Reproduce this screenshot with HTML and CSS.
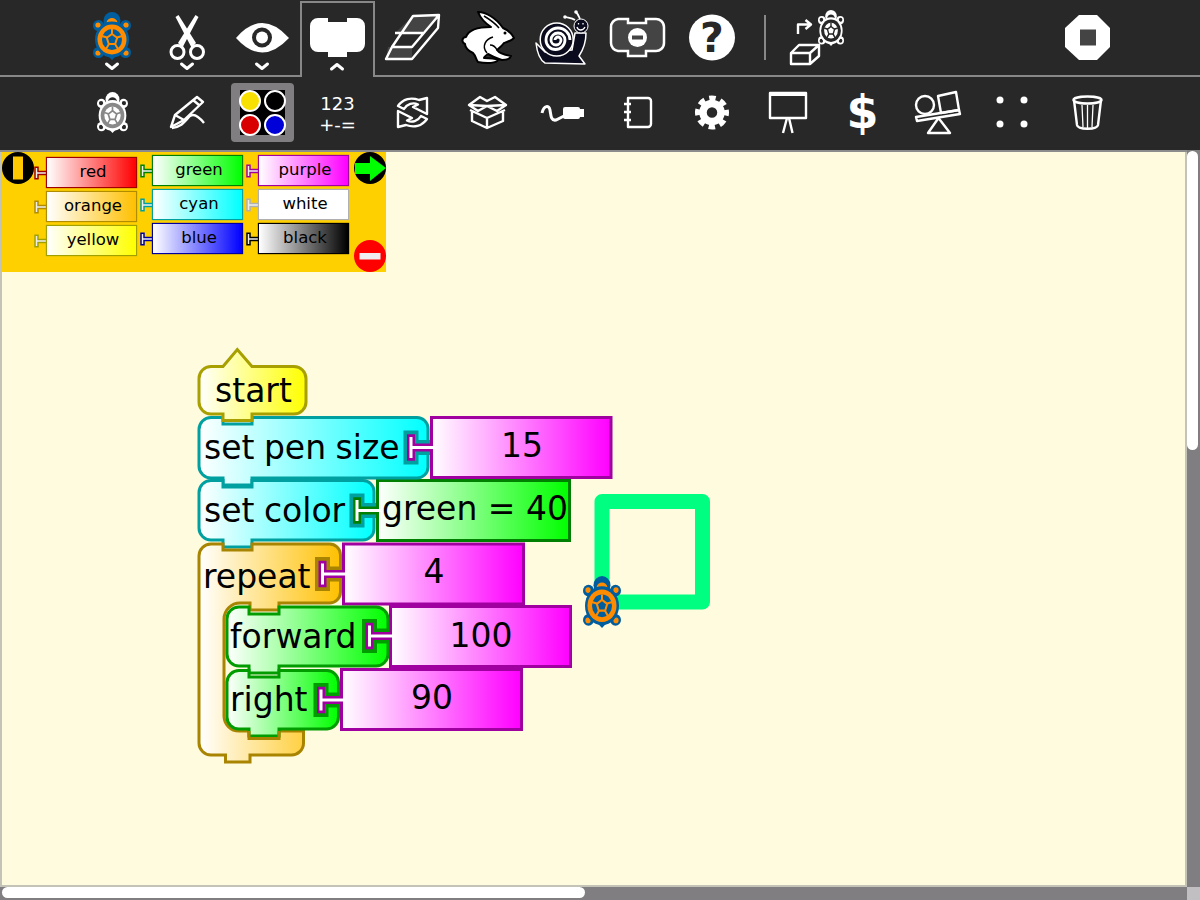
FILE: index.html
```html
<!DOCTYPE html>
<html lang="en">
<head>
<meta charset="utf-8">
<title>Turtle Blocks</title>
<link rel="stylesheet" href="styles.css">
</head>
<body>
<svg class="defs" width="0" height="0">
  <defs>
    <symbol id="turtle" viewBox="0 0 38 48" preserveAspectRatio="none">
      <circle class="t-outer" cx="19" cy="8.5" r="8.5"/>
      <path class="t-leg" d="M13.5 10.5 C14.5 4.5 23.5 4.5 24.5 10.5 Z"/>
      <circle class="t-outer" cx="5.5" cy="13.5" r="5.5"/>
      <circle class="t-outer" cx="32.5" cy="13.5" r="5.5"/>
      <circle class="t-outer" cx="5.5" cy="40.5" r="5.5"/>
      <circle class="t-outer" cx="32.5" cy="40.5" r="5.5"/>
      <circle class="t-leg" cx="5" cy="13" r="2.6"/>
      <circle class="t-leg" cx="33" cy="13" r="2.6"/>
      <circle class="t-leg" cx="5" cy="41" r="2.6"/>
      <circle class="t-leg" cx="33" cy="41" r="2.6"/>
      <path class="t-outer" d="M15 44 L19 48 L23 44 Z"/>
      <ellipse class="t-outer" cx="19" cy="27.500" rx="17" ry="18"/>
      <ellipse class="t-ring" cx="19" cy="27.500" rx="14.500" ry="15"/>
      <ellipse class="t-core" cx="19" cy="27.500" rx="10" ry="10.500"/>
      <path class="t-spoke" d="M19 27 V17 M19 27 L29 24 M19 27 L25 37 M19 27 L13 37 M19 27 L9 24"/>
      <path class="t-penta" d="M19 22 L24.200 25.800 L22.200 32 L15.800 32 L13.800 25.800 Z"/>
    </symbol>
    <symbol id="ptee" viewBox="0 0 13 14">
      <path class="ptee-o" d="M2.500 0.500 V13.500 M2.500 7 H13"/>
      <path class="ptee-i" d="M2.500 2 V12 M2.500 7 H13"/>
    </symbol>
    <g id="tee">
      <path class="tee-sock" d="M0 -17 V17 M0 0 H19"/>
      <path class="tee-val" d="M0 -13.300 V13.300 M0 0 H22"/>
      <path class="tee-core" d="M0 -10.500 V10.500 M0 0 H23"/>
    </g>
    <linearGradient id="g-yellow"><stop offset="0" stop-color="#fff"/><stop offset="1" stop-color="#ff0"/></linearGradient>
    <linearGradient id="g-cyan"><stop offset="0" stop-color="#fff"/><stop offset="1" stop-color="#0ff"/></linearGradient>
    <linearGradient id="g-green"><stop offset="0" stop-color="#fff"/><stop offset="1" stop-color="#0f0"/></linearGradient>
    <linearGradient id="g-orange"><stop offset="0" stop-color="#fff"/><stop offset="1" stop-color="#ffc000"/></linearGradient>
    <linearGradient id="g-purple"><stop offset="0" stop-color="#fff"/><stop offset="1" stop-color="#f0f"/></linearGradient>
  </defs>
</svg>

<header class="toolbar">
  <nav class="row row-main">
    <div class="tool">
      <svg class="icon" viewBox="75 0 75 75">
        <use class="turtle-color" href="#turtle" x="93" y="12" width="38" height="48"/>
        <path class="chev" d="M106.500 64 L112 68.500 L117.500 64"/>
      </svg>
    </div>
    <div class="tool">
      <svg class="icon" viewBox="150 0 75 75">
        <path class="fill-w" d="M175.500 17 L178.500 15 L196 43 L191.500 47.500 Z"/>
        <path class="fill-w" d="M198.500 17 L195.500 15 L178 43 L182.500 47.500 Z"/>
        <circle class="line-w3" cx="177.500" cy="52" r="6.500"/>
        <circle class="line-w3" cx="197" cy="52" r="6.500"/>
        <path class="chev" d="M181.500 64 L187 68.500 L192.500 64"/>
      </svg>
    </div>
    <div class="tool">
      <svg class="icon" viewBox="225 0 75 75">
        <path class="fill-w" d="M236 38 Q262 8 289 38 Q262 67 236 38 Z"/>
        <circle class="fill-d" cx="262" cy="37.500" r="10"/>
        <circle class="fill-w" cx="262" cy="37.500" r="6"/>
        <path class="chev" d="M256.500 64 L262 68.500 L267.500 64"/>
      </svg>
    </div>
    <div class="tool tool-active">
      <svg class="icon icon-active" viewBox="300 0 75 75">
        <path class="fill-w" d="M318 18 H328 V22 H347 V18 H357 A8 8 0 0 1 365 26 V44 A8 8 0 0 1 357 52 H347 V57 H328 V52 H318 A8 8 0 0 1 310 44 V26 A8 8 0 0 1 318 18 Z"/>
        <path class="chev" d="M331.500 69 L337 64.500 L342.500 69"/>
      </svg>
    </div>
    <div class="tool">
      <svg class="icon" viewBox="375 0 75 75">
        <path class="face" d="M413 16 L439 15 L423 33 L395 33 Z"/>
        <path class="face" d="M388 47 L412 47 L412 59 L386 59 Z"/>
        <path class="line-w" d="M413 16 L439 15 L438 28 L412 59 L386 59 L392 47 Z M439 15 L412 47 H391 M395 33 H423"/>
      </svg>
    </div>
    <div class="tool">
      <svg class="icon" viewBox="450 0 75 75">
        <path class="rabbit" d="M478 12 C486 12 496 18 503 28 C508 30 512 34 514 38 C511 41 507 42 504 43 C501 47 498 49 497 50 C499 53 505 55 511 56 C510 59 506 60 502 60 C497 59 492 56 488 54 C485 56 484 57 484 58 C488 58 494 58 498 60 C497 63 487 64 478 62 C476 60 476 56 473 53 C468 51 465 47 465 44 C461 42 462 37 466 37 C468 31 476 27 491 27 C485 23 480 17 478 12 Z"/>
        <path class="rabbit-line" d="M493 37 C486 39 481 46 487 53 M497 50 C495 46 492 45 490 45 M484 16 C489 19 495 23 499 28"/>
        <circle class="fill-k" cx="505" cy="33" r="1.500"/>
      </svg>
    </div>
    <div class="tool">
      <svg class="icon" viewBox="525 0 75 75">
        <path class="snail-body" d="M536 43 L545 52 L572 50 L575 33 H586 C586 42 583 50 579 56 L585 64 L545 63 C540 60 537 52 536 43 Z"/>
        <circle class="snail-shell" cx="556.700" cy="39.500" r="16.500"/>
        <path class="snail-spiral" d="M555 40 A3 3 0 0 1 561 40 A5 5 0 0 1 551 40 A7 7 0 0 1 565 40 A9.500 9.500 0 0 1 546 40 A12 12 0 0 1 570 40"/>
        <path class="line-w2" d="M575 20 C572 18 569 18 565 17 M580 19 C579 17 578 14 576 12"/>
        <circle class="fill-w" cx="565" cy="17" r="1.800"/>
        <circle class="fill-w" cx="576" cy="12" r="1.800"/>
        <circle class="snail-head" cx="581" cy="26" r="7"/>
        <path class="snail-face" d="M577 27 C578 31 583 31 585 27 M578.500 23 V24.500 M583 23 V24.500"/>
      </svg>
    </div>
    <div class="tool">
      <svg class="icon" viewBox="600 0 75 75">
        <path class="block-off" d="M618 19 H628 V23 H646 V19 H655 A8 8 0 0 1 664 27 V43 A8 8 0 0 1 655 51 H646 V56 H628 V51 H618 A8 8 0 0 1 611 43 V27 A8 8 0 0 1 618 19 Z"/>
        <circle class="fill-w" cx="637.500" cy="37.500" r="9.500"/>
        <rect class="fill-d2" x="632" y="35.500" width="11" height="4"/>
      </svg>
    </div>
    <div class="tool">
      <svg class="icon" viewBox="675 0 75 75">
        <circle class="fill-w" cx="712" cy="37.500" r="23"/>
        <text class="help" x="712" y="52">?</text>
      </svg>
    </div>
    <div class="sep"></div>
    <div class="tool">
      <svg class="icon" viewBox="780 0 75 75">
        <path class="line-w" d="M798 34 V24.500 H810 M805.500 20 L811 24.500 L805.500 29"/>
        <path class="line-w" d="M791 53 H810 V64 H791 Z M791 53 L799 45 H819 L819 56 L810 64 M810 53 L819 45"/>
        <use class="turtle-line" href="#turtle" x="818" y="10" width="26" height="36"/>
      </svg>
    </div>
    <div class="tool tool-stop">
      <svg class="icon" viewBox="1050 0 75 75">
        <path class="fill-w" d="M1079 15 H1097 L1110 28 V47 L1097 60 H1079 L1065 47 V28 Z"/>
        <rect class="stop-core" x="1080" y="29.500" width="16" height="16"/>
      </svg>
    </div>
  </nav>
  <nav class="row row-sub">
    <div class="tool">
      <svg class="icon-sub" viewBox="75 77 75 73">
        <use class="turtle-gray" href="#turtle" x="97" y="92" width="31" height="41"/>
      </svg>
    </div>
    <div class="tool">
      <svg class="icon-sub" viewBox="150 77 75 73">
        <path class="line-w" d="M171 127 L175 115 L197 97 L203 102 L184 120 Z M175 115 L184 120 M193 100 L199 105"/>
        <path class="line-w" d="M172 128 C180 128 184 122 190 116 C194 113 200 118 204 123"/>
      </svg>
    </div>
    <div class="tool tool-palette">
      <div class="swatches">
        <span class="swatch swatch-yellow"></span>
        <span class="swatch swatch-black"></span>
        <span class="swatch swatch-red"></span>
        <span class="swatch swatch-blue"></span>
      </div>
    </div>
    <div class="tool tool-math">
      <span class="math-line">123</span>
      <span class="math-line">+-=</span>
    </div>
    <div class="tool">
      <svg class="icon-sub" viewBox="375 77 75 73">
        <path class="line-w" d="M398 106 C403 99 411 97 419 100 L427 98 V114 L413 107 L418 104.500 C413 102 407 104 404 109 Z"/>
        <path class="line-w" d="M427 119 C422 126 414 128 406 125 L398 127 V111 L412 118 L407 120.500 C412 123 418 121 421 116 Z"/>
      </svg>
    </div>
    <div class="tool">
      <svg class="icon-sub" viewBox="450 77 75 73">
        <path class="line-w" d="M469 105 L480 97 L487 101 L495 97 L506 105 L497 111 L487 106 L478 111 Z M487 106 L506 105 M469 105 L487 106 M470 110 L487 118 L505 110 M472 112 V121 L487 128 L503 121 V112 M487 128 V118"/>
      </svg>
    </div>
    <div class="tool">
      <svg class="icon-sub" viewBox="525 77 75 73">
        <path class="line-w3" d="M542 113 C544 105 549 105 550 110 C551 116 551 121 556 120 L564 116"/>
        <rect class="fill-w" x="563" y="107" width="17" height="12" rx="2"/>
        <rect class="fill-w" x="579" y="109" width="5" height="8"/>
      </svg>
    </div>
    <div class="tool">
      <svg class="icon-sub" viewBox="600 77 75 73">
        <path class="line-w" d="M628 98 H648 A3 3 0 0 1 651 101 V124 A3 3 0 0 1 648 127 H628 Z"/>
        <path class="line-w" d="M624 104 H631 M624 112 H631 M624 120 H631"/>
      </svg>
    </div>
    <div class="tool">
      <svg class="icon-sub" viewBox="675 77 75 73">
        <circle class="gear-ring" cx="712" cy="112.500" r="9"/>
        <circle class="gear-teeth" cx="712" cy="112.500" r="14.500"/>
      </svg>
    </div>
    <div class="tool">
      <svg class="icon-sub" viewBox="750 77 75 73">
        <path class="line-w" d="M770 93 H806 V118 H770 Z"/>
        <path class="line-w3" d="M770 94.500 H806"/>
        <path class="line-w" d="M787 118 L783 133 M789 118 L792.500 133"/>
      </svg>
    </div>
    <div class="tool tool-dollar"><span class="dollar">$</span></div>
    <div class="tool">
      <svg class="icon-sub" viewBox="900 77 75 73">
        <circle class="line-w" cx="925" cy="105" r="9"/>
        <path class="line-w" d="M938 96 L956 92 L959 110 L941 113 Z"/>
        <path class="line-w" d="M916 117 L959 110 L960 114 L917 121 Z"/>
        <path class="line-w" d="M938.500 118 L928 133 H950 Z"/>
      </svg>
    </div>
    <div class="tool">
      <svg class="icon-sub" viewBox="975 77 75 73">
        <circle class="fill-w" cx="1000" cy="100" r="3.500"/>
        <circle class="fill-w" cx="1024" cy="100" r="3.500"/>
        <circle class="fill-w" cx="1000" cy="124" r="3.500"/>
        <circle class="fill-w" cx="1024" cy="124" r="3.500"/>
      </svg>
    </div>
    <div class="tool">
      <svg class="icon-sub" viewBox="1050 77 75 73">
        <ellipse class="line-w" cx="1087.500" cy="100" rx="14" ry="3.500"/>
        <path class="line-w" d="M1074 100 L1077 125 C1078 130 1097 130 1098 125 L1101 100"/>
        <path class="line-t" d="M1082 105 L1083 127 M1087.500 105 V128 M1093 105 L1092 127"/>
      </svg>
    </div>
  </nav>
</header>

<main class="workspace">
  <section class="canvas">
    <svg class="drawing" viewBox="0 150 1186 735">
      <rect class="pen-trace" x="602" y="501.500" width="100.500" height="100.500"/>
      <use class="turtle-color" href="#turtle" x="583" y="576" width="38" height="52"/>

      <!-- value blocks -->
      <rect class="val val-purple" x="431.500" y="417.500" width="179.500" height="60"/>
      <text class="lbl lbl-mid" x="522" y="457">15</text>
      <rect class="val val-green" x="377.500" y="480.500" width="192" height="60"/>
      <text class="lbl lbl-mid" x="475" y="520">green = 40</text>
      <rect class="val val-purple" x="343.500" y="544" width="180" height="60"/>
      <text class="lbl lbl-mid" x="434" y="583">4</text>
      <rect class="val val-purple" x="390.500" y="606.500" width="180" height="60"/>
      <text class="lbl lbl-mid" x="481" y="647">100</text>
      <rect class="val val-purple" x="341.500" y="669.500" width="180" height="60"/>
      <text class="lbl lbl-mid" x="432" y="709">90</text>

      <!-- stack -->
      <g>
        <path class="blk blk-cyan" d="M211 417.500 H223 V424 H252 V417.500 H417 A11 11 0 0 1 428 428.500 V467 A11 11 0 0 1 417 478 H252 V485 H223 V478 H211 A12 12 0 0 1 199 466 V429.500 A12 12 0 0 1 211 417.500 Z"/>
        <text class="lbl lbl-tight" x="204" y="459">set pen size</text>
        <use class="tee-cyan-purple" href="#tee" x="411" y="447.500"/>

        <path class="blk blk-cyan" d="M211 480.500 H223 V487 H252 V480.500 H363 A11 11 0 0 1 374 491.500 V529 A11 11 0 0 1 363 540 H252 V547 H223 V540 H211 A12 12 0 0 1 199 528 V492.500 A12 12 0 0 1 211 480.500 Z"/>
        <text class="lbl lbl-tight" x="204" y="522">set color</text>
        <use class="tee-cyan-green" href="#tee" x="357" y="510.500"/>

        <path class="blk blk-orange" d="M211 544 H223 V550 H252 V544 H329 A11 11 0 0 1 340.500 555 V592 A11 11 0 0 1 329 603 H279 V610 H250 V603 H240 A16 16 0 0 0 224 619 V716 A15 15 0 0 0 239 731 H303.500 V743 A12 12 0 0 1 291 755 H250 V762 H225.500 V755 H211 A12 12 0 0 1 199 743 V556 A12 12 0 0 1 211 544 Z"/>
        <text class="lbl" x="203" y="588">repeat</text>
        <use class="tee-orange-purple" href="#tee" x="322.500" y="574"/>

        <path class="blk blk-green" d="M239 607 H249 V614 H279 V607 H376 A12 12 0 0 1 388 619 V654 A12 12 0 0 1 376 666 H279 V673 H249 V666 H239 A12 12 0 0 1 227 654 V619 A12 12 0 0 1 239 607 Z"/>
        <text class="lbl" x="230" y="648">forward</text>
        <use class="tee-green-purple" href="#tee" x="369.500" y="636"/>

        <path class="blk blk-green" d="M239 670.500 H249 V677 H279 V670.500 H327 A12 12 0 0 1 338.500 682 V717 A12 12 0 0 1 327 729 H279 V736 H249 V729 H239 A12 12 0 0 1 227 717 V682 A12 12 0 0 1 239 670.500 Z"/>
        <text class="lbl" x="230" y="711">right</text>
        <use class="tee-green-purple" href="#tee" x="321" y="700"/>
        <path class="notch-orange" d="M249 731 V738.500 H279 V731"/>

        <path class="blk blk-yellow" d="M211 366.500 H223 L237.300 349.500 L252 366.500 H294 A12 12 0 0 1 306 378.500 V402 A12 12 0 0 1 294 414 H252 V420.500 H223 V414 H211 A12 12 0 0 1 199 402 V378.500 A12 12 0 0 1 211 366.500 Z"/>
        <text class="lbl" x="215" y="402">start</text>
      </g>
    </svg>

    <aside class="palette">
      <svg class="pal-btn pal-btn-pin" viewBox="0 0 32 32">
        <circle class="fill-k" cx="16" cy="16" r="16"/>
        <rect class="pal-pin" x="10.500" y="4" width="11" height="24"/>
      </svg>
      <div class="pal-col pal-col-first">
        <div class="pal-item c-red"><svg class="ptee"><use href="#ptee"/></svg><span class="pal-block">red</span></div>
        <div class="pal-item c-orange"><svg class="ptee"><use href="#ptee"/></svg><span class="pal-block">orange</span></div>
        <div class="pal-item c-yellow"><svg class="ptee"><use href="#ptee"/></svg><span class="pal-block">yellow</span></div>
      </div>
      <div class="pal-col">
        <div class="pal-item c-green"><svg class="ptee"><use href="#ptee"/></svg><span class="pal-block">green</span></div>
        <div class="pal-item c-cyan"><svg class="ptee"><use href="#ptee"/></svg><span class="pal-block">cyan</span></div>
        <div class="pal-item c-blue"><svg class="ptee"><use href="#ptee"/></svg><span class="pal-block">blue</span></div>
      </div>
      <div class="pal-col">
        <div class="pal-item c-purple"><svg class="ptee"><use href="#ptee"/></svg><span class="pal-block">purple</span></div>
        <div class="pal-item c-white"><svg class="ptee"><use href="#ptee"/></svg><span class="pal-block">white</span></div>
        <div class="pal-item c-black"><svg class="ptee"><use href="#ptee"/></svg><span class="pal-block">black</span></div>
      </div>
      <svg class="pal-btn pal-btn-next" viewBox="0 0 32 32">
        <circle class="fill-k" cx="16" cy="16" r="16"/>
        <path class="pal-arrow" d="M1 11 H16 V4 L32 16 L16 29 V22 H1 Z"/>
      </svg>
      <svg class="pal-btn pal-btn-close" viewBox="0 0 32 32">
        <circle class="pal-red" cx="16" cy="16" r="16"/>
        <rect class="pal-minus" x="5.500" y="13" width="21" height="6.500"/>
      </svg>
    </aside>
  </section>
  <div class="scroll-v"><div class="thumb-v"></div></div>
  <div class="scroll-h"><div class="thumb-h"></div></div>
  <div class="scroll-corner"></div>
</main>
</body>
</html>
```

FILE: styles.css
```css
* { box-sizing: border-box; }
html, body { margin: 0; height: 100%; }
body {
  width: 1200px;
  height: 900px;
  display: flex;
  flex-direction: column;
  overflow: hidden;
  background: #282828;
  font-family: "DejaVu Sans", sans-serif;
}
.defs { position: absolute; }

/* toolbars */
.toolbar { height: 150px; flex: none; background: #282828; }
.row { display: flex; padding-left: 75px; }
.row-main { height: 77px; border-bottom: 2px solid #888; }
.row-sub { height: 73px; }
.tool { width: 75px; flex: none; }
.icon { display: block; width: 75px; height: 75px; }
.icon-sub { display: block; width: 75px; height: 73px; }
.tool-active {
  position: relative;
  height: 76px;
  margin-top: 1px;
  background: #282828;
  box-shadow: inset 2px 0 #888, inset -2px 0 #888, inset 0 2px #888;
}
.icon-active { margin-top: -1px; }
.sep { width: 2px; height: 45px; margin: 15px 14px 0; background: #888; flex: none; }
.tool-stop { margin-left: auto; margin-right: 75px; }

.fill-w { fill: #fff; }
.fill-d { fill: #282828; }
.fill-d2 { fill: #444; }
.fill-k { fill: #000; }
.line-w { fill: none; stroke: #fff; stroke-width: 2.4; stroke-linejoin: round; }
.line-w2 { fill: none; stroke: #fff; stroke-width: 1.8; }
.line-w3 { fill: none; stroke: #fff; stroke-width: 3; }
.line-t { fill: none; stroke: #fff; stroke-width: 1.3; }
.chev { fill: none; stroke: #fff; stroke-width: 3; stroke-linecap: round; stroke-linejoin: round; }
.face { fill: #444; }
.rabbit { fill: #fff; stroke: #000; stroke-width: 2; stroke-linejoin: round; }
.rabbit-line { fill: none; stroke: #000; stroke-width: 1.5; }
.snail-body { fill: #0b0b1e; stroke: #fff; stroke-width: 1.5; stroke-linejoin: round; }
.snail-shell { fill: #0b0b1e; stroke: #fff; stroke-width: 1.5; }
.snail-spiral { fill: none; stroke: #fff; stroke-width: 2.8; }
.snail-head { fill: #0b0b1e; stroke: #fff; stroke-width: 1; }
.snail-face { fill: none; stroke: #fff; stroke-width: 1.3; }
.block-off { fill: #444; stroke: #fff; stroke-width: 2.5; }
.help { font: bold 41px "DejaVu Sans", sans-serif; fill: #282828; text-anchor: middle; }
.stop-core { fill: #444; }
.gear-ring { fill: none; stroke: #fff; stroke-width: 7.5; }
.gear-teeth { fill: none; stroke: #fff; stroke-width: 5; stroke-dasharray: 6.5 4.89; stroke-dashoffset: 3.25; }

/* turtle symbol */
.t-outer { fill: var(--t-outer); }
.t-leg { fill: var(--t-leg); }
.t-ring { fill: var(--t-ring); }
.t-core { fill: var(--t-core); }
.t-spoke { fill: none; stroke: var(--t-spoke); stroke-width: 2; }
.t-penta { fill: var(--t-penta); stroke: var(--t-spoke); stroke-width: 2; }
.turtle-color { --t-outer: #005e9e; --t-leg: #ff8c00; --t-ring: #ff8c00; --t-core: #005e9e; --t-spoke: #ff8c00; --t-penta: #005e9e; }
.turtle-gray { --t-outer: #fff; --t-leg: #282828; --t-ring: #888; --t-core: #fff; --t-spoke: #888; --t-penta: #fff; }
.turtle-line { --t-outer: #fff; --t-leg: #282828; --t-ring: #282828; --t-core: #fff; --t-spoke: #282828; --t-penta: #fff; }

/* second toolbar cells */
.tool-palette { display: flex; justify-content: center; padding-top: 6px; }
.swatches {
  width: 63px;
  height: 59px;
  padding: 5.500px 7px;
  border-radius: 4px;
  display: grid;
  grid-template-columns: 1fr 1fr;
  grid-template-rows: 1fr 1fr;
  place-items: center;
  background: linear-gradient(#000, #000) center / 45px 45px no-repeat, #807e80;
}
.swatch { width: 22px; height: 22px; border-radius: 50%; border: 2px solid #fff; }
.swatch-yellow { background: #f8e000; }
.swatch-black { background: #000; }
.swatch-red { background: #d80000; }
.swatch-blue { background: #0000d8; }
.tool-math { display: flex; flex-direction: column; align-items: center; padding-top: 16px; color: #fff; }
.math-line { font-size: 18px; line-height: 21px; }
.tool-dollar { display: flex; justify-content: center; padding-top: 5px; }
.dollar { color: #fff; font-size: 46px; font-weight: bold; line-height: 60px; }

/* workspace */
.workspace {
  flex: 1;
  display: grid;
  grid-template-columns: 1187px 13px;
  grid-template-rows: 737px 13px;
  min-height: 0;
}
.canvas {
  position: relative;
  background: #fffbdf;
  box-shadow: inset 0 2px #8c8c8c, inset 2px 0 #c3c3b8, inset -2px 0 #c3c3b8, inset 0 -2px #c3c3b8;
  padding: 2px;
  overflow: hidden;
}
.drawing { position: absolute; left: 0; top: 0; width: 1186px; height: 735px; }
.pen-trace { fill: none; stroke: #00ff80; stroke-width: 15; stroke-linejoin: round; }
.scroll-v { background: #807e80; padding-top: 1px; }
.thumb-v { width: 11px; height: 299px; background: #fff; border-radius: 6px; }
.scroll-h { background: #807e80; padding: 0 0 0 2px; }
.thumb-h { width: 583px; height: 11px; background: #fff; border-radius: 6px; }
.scroll-corner { background: #c2bfc2; }

/* program blocks */
.lbl { font-size: 33px; fill: #000; }
.lbl-mid { text-anchor: middle; }
.lbl-tight { word-spacing: -1px; }
.val { stroke-width: 3; }
.val-purple { fill: url(#g-purple); stroke: #a000a0; }
.val-green { fill: url(#g-green); stroke: #008000; }
.blk { stroke-width: 3; }
.blk-yellow { fill: url(#g-yellow); stroke: #a8a000; }
.blk-cyan { fill: url(#g-cyan); stroke: #00a0a0; }
.blk-green { fill: url(#g-green); stroke: #009c00; }
.blk-orange { fill: url(#g-orange); stroke: #a88400; }
.notch-orange { fill: none; stroke: #a88400; stroke-width: 3; }
.tee-sock { fill: none; stroke: var(--sock); stroke-width: 15; }
.tee-val { fill: none; stroke: var(--val); stroke-width: 8; }
.tee-core { fill: none; stroke: #fff; stroke-width: 3; }
.tee-cyan-purple { --sock: #00a0a0; --val: #a000a0; }
.tee-cyan-green { --sock: #00a0a0; --val: #008000; }
.tee-orange-purple { --sock: #a88400; --val: #a000a0; }
.tee-green-purple { --sock: #009c00; --val: #a000a0; }

/* palette */
.palette {
  position: relative;
  width: 384px;
  height: 120px;
  background: #ffd000;
  display: flex;
  gap: 3px;
  padding-left: 32px;
}
.pal-btn { position: absolute; width: 32px; height: 32px; }
.pal-btn-pin { left: 0; top: 0; }
.pal-btn-next { right: 0; top: 0; }
.pal-btn-close { right: 0; bottom: 0; }
.pal-pin { fill: #ffc800; stroke: #000; stroke-width: 1; }
.pal-arrow { fill: #0f0; }
.pal-red { fill: #f00; }
.pal-minus { fill: #f0eef0; }
.pal-col { display: flex; flex-direction: column; gap: 3px; padding-top: 3px; }
.pal-col-first { padding-top: 5px; }
.pal-item { display: flex; align-items: center; height: 31px; }
.ptee { width: 13px; height: 14px; flex: none; margin-right: -1px; }
.ptee-o { fill: none; stroke: var(--c); stroke-width: 4.5; }
.ptee-i { fill: none; stroke: #eee; stroke-width: 1.5; }
.pal-block {
  width: 91px;
  height: 31px;
  border: 1px solid var(--c);
  box-shadow: 0 0 1px var(--c);
  background: linear-gradient(to right, #fff, var(--f));
  color: #000;
  font-size: 16.500px;
  line-height: 28px;
  padding-left: 3px;
  text-align: center;
}
.c-red { --c: #a00000; --f: #f00; }
.c-orange { --c: #b08c00; --f: #ffc000; }
.c-yellow { --c: #a0a000; --f: #ff0; }
.c-green { --c: #008000; --f: #0f0; }
.c-cyan { --c: #00a0a0; --f: #0ff; }
.c-blue { --c: #0000a0; --f: #00f; }
.c-purple { --c: #a000a0; --f: #f0f; }
.c-white { --c: #b0b0b0; --f: #fff; }
.c-black { --c: #000; --f: #000; }
```
